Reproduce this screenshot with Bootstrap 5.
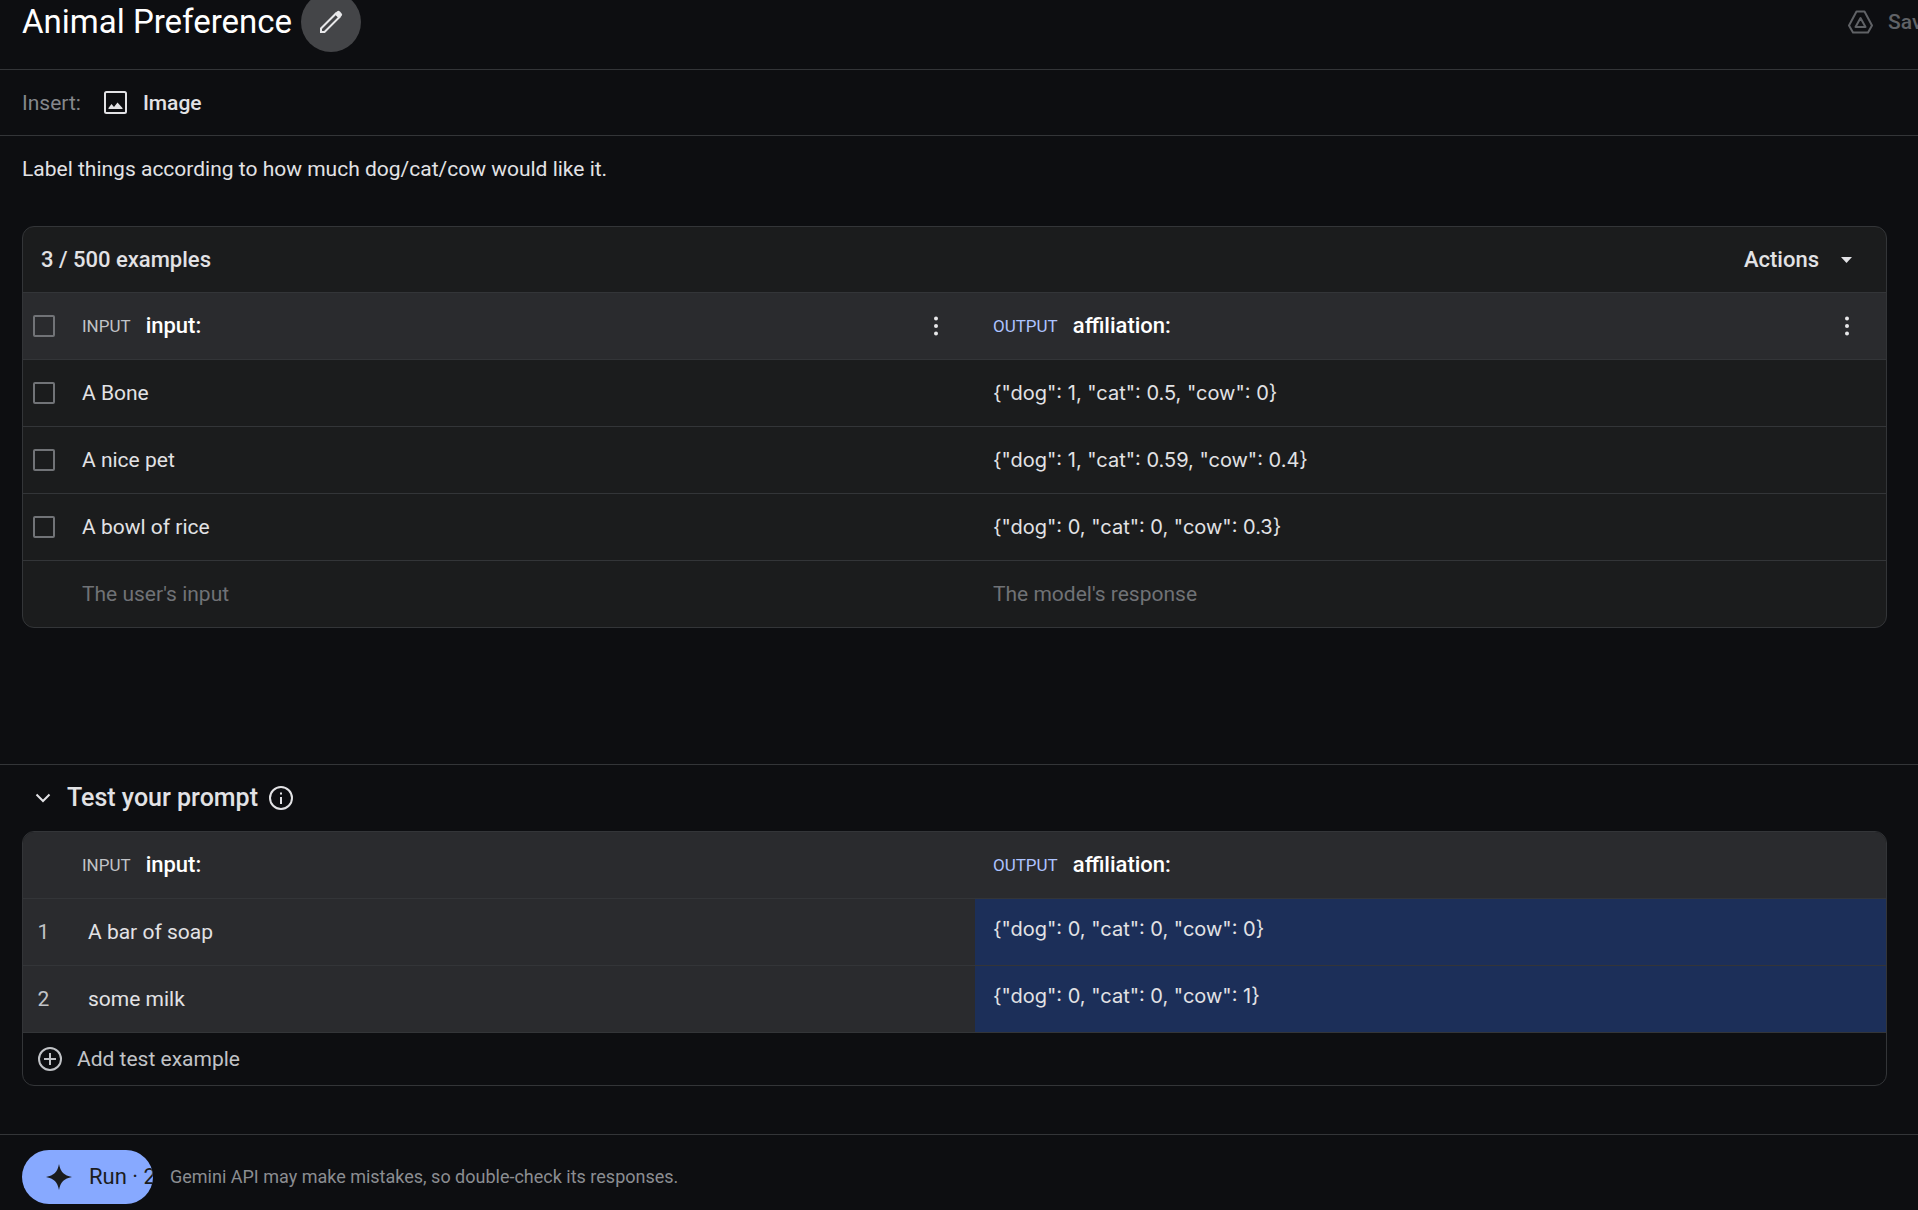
<!DOCTYPE html>
<html lang="en" data-bs-theme="dark">
<head>
<meta charset="utf-8">
<meta name="viewport" content="width=device-width, initial-scale=1">
<title>Animal Preference</title>
<link href="https://cdn.jsdelivr.net/npm/bootstrap@5.3.0/dist/css/bootstrap.min.css" rel="stylesheet">
<style>
:root { --line: #333538; --ink: #e2e2e5; --soft: #c1c3c7; --dim: #707276; }
body { font-family: Roboto, "Open Sans", sans-serif; font-size: 21px; line-height: 30px; color: var(--ink); background: #0d0e11; overflow-x: hidden; }
svg { display: block; flex: none; }
button, input, textarea { color: inherit; font: inherit; letter-spacing: inherit; }
button, textarea, .cell-input { background: none; border: 0; padding: 0; outline-offset: 4px; }
.topbar { height: 70px; padding-left: 22px; padding-bottom: 25px; border-bottom: 1px solid var(--line); }
.title-group { gap: 9px; }
.page-title { font-size: 33px; line-height: 44px; font-weight: 400; }
.edit-btn { width: 60px; height: 60px; background: #444548; }
.save-btn { width: 70px; gap: 15px; color: #606266; font-weight: 500; }
.toolbar { height: 66px; padding-left: 22px; gap: 23px; border-bottom: 1px solid var(--line); }
.insert-label { color: #85878b; }
.insert-btn { gap: 16px; font-weight: 500; }
.editor { padding: 18px 31px 40px 22px; }
.prompt-box { resize: none; height: 30px; margin-bottom: 42px; overflow: hidden; }
.panel { border: 1px solid var(--line); border-radius: 12px; overflow: hidden; }
.panel-dark { background: #1b1c1d; }
.panel-head { height: 66px; padding: 0 34px 0 18px; border-bottom: 1px solid var(--line); font-size: 22px; font-weight: 500; }
.actions-btn { gap: 22px; font-weight: 500; }
.grid { width: 100%; table-layout: fixed; border-collapse: separate; border-spacing: 0; }
.grid th, .grid td { height: 67px; padding: 0 18px; border-bottom: 1px solid var(--line); vertical-align: middle; font-weight: 400; }
.grid .pick-col { width: 41px; padding: 0 0 0 10px; }
.grid thead th { background: #2a2b2e; }
.panel-dark tbody tr:last-child td { height: 66px; border-bottom: 0; }
.tests tbody td { background: #2a2b2e; }
.tests tbody .num { padding: 0; text-align: center; color: var(--soft); }
.tests tbody .case { padding-left: 24px; }
.tests tbody .result { background: #1c2f59; padding-bottom: 6px; }
.grid .json { font-family: Inter, Roboto, sans-serif; font-size: 20px; }
.kind { font-size: 17px; color: var(--soft); }
.kind-out { color: #adc3ff; }
.col-name { color: #fff; font-size: 22px; font-weight: 500; }
.head-cell { gap: 15px; }
.kebab { width: 42px; height: 44px; }
.tick { appearance: none; display: block; width: 22px; height: 22px; margin: 0; border: 2px solid #717377; border-radius: 2px; }
.tick:checked { background: #87a9ff; }
.cell-input { width: 100%; }
.cell-input::placeholder { color: var(--dim); opacity: 1; }
.test-area { border-top: 1px solid var(--line); padding: 0 31px 48px 22px; }
.test-head { height: 66px; gap: 11px; }
.fold { gap: 16px; padding-left: 13px; }
.test-title { font-size: 25px; line-height: 30px; font-weight: 500; }
.add-btn { height: 52px; padding: 0 15px; gap: 15px; color: var(--soft); }
.runbar { height: 76px; padding: 15px 22px 6px; gap: 17px; border-top: 1px solid var(--line); }
.run-btn { width: 131px; height: 54px; padding-left: 23px; gap: 16px; font-size: 22px; background: #87a9ff; color: #1b1c1d; border-radius: 27px; }
.note { font-size: 18px; color: #8b8d91; }
</style>
<script src="https://cdn.jsdelivr.net/npm/bootstrap@5.3.0/dist/js/bootstrap.bundle.min.js"></script>
</head>
<body>
<div class="d-flex flex-column min-vh-100">
  <header class="topbar d-flex align-items-center justify-content-between">
    <div class="title-group d-flex align-items-center">
      <h1 class="page-title mb-0">Animal Preference</h1>
      <button type="button" class="edit-btn rounded-circle d-flex align-items-center justify-content-center" aria-label="Edit title">
        <svg width="24" height="24" viewBox="0 0 24 24" fill="none" stroke="#e8e8ea" stroke-width="2"><path d="M2 22v-3.500L17 3.500 20.500 7 5.500 22z"/><path d="M15.500 4 18 1.500a2 2 0 0 1 2.800 0l1.700 1.700a2 2 0 0 1 0 2.800L20 8.500z" fill="#e8e8ea" stroke="none"/></svg>
      </button>
    </div>
    <button type="button" class="save-btn d-flex align-items-center overflow-hidden text-nowrap flex-shrink-0">
      <svg width="25" height="24" viewBox="0 0 25 24" fill="none" stroke="#606266" stroke-width="2" stroke-linejoin="round"><path d="M8.500 1.500h8L24 15.500l-4 7H5l-4-7z"/><path d="M12.500 8 7.500 17h10z"/></svg>
      <span>Save</span>
    </button>
  </header>

  <div class="toolbar d-flex align-items-center">
    <span class="insert-label">Insert:</span>
    <button type="button" class="insert-btn d-flex align-items-center">
      <svg width="23" height="23" viewBox="0 0 23 23"><rect x="1" y="1" width="21" height="21" rx="1.500" fill="none" stroke="#e2e2e5" stroke-width="2"/><path d="M4.500 18v-1l3-4 2.500 3 3.500-4.500 5 5.500v1z" fill="#e2e2e5"/></svg>
      <span>Image</span>
    </button>
  </div>

  <main class="editor flex-grow-1">
    <textarea class="prompt-box d-block w-100" rows="1" aria-label="Prompt">Label things according to how much dog/cat/cow would like it.</textarea>
    <section class="panel panel-dark">
      <div class="panel-head d-flex align-items-center justify-content-between">
        <span>3 / 500 examples</span>
        <button type="button" class="actions-btn d-flex align-items-center">Actions
          <svg width="11" height="6" viewBox="0 0 11 6"><path d="M0 0h11L5.500 6z" fill="#e2e2e5"/></svg>
        </button>
      </div>
      <table class="grid">
        <thead>
          <tr>
            <th class="pick-col"><input type="checkbox" class="tick" aria-label="Select all"></th>
            <th scope="col"><div class="head-cell d-flex align-items-center"><span class="kind">INPUT</span><span class="col-name">input:</span>
              <button type="button" class="kebab ms-auto d-flex align-items-center justify-content-center" aria-label="Input column menu"><svg width="6" height="20" viewBox="0 0 6 20" fill="#e8e8ea"><circle cx="3" cy="2.500" r="2"/><circle cx="3" cy="10" r="2"/><circle cx="3" cy="17.500" r="2"/></svg></button></div></th>
            <th scope="col"><div class="head-cell d-flex align-items-center"><span class="kind kind-out">OUTPUT</span><span class="col-name">affiliation:</span>
              <button type="button" class="kebab ms-auto d-flex align-items-center justify-content-center" aria-label="Output column menu"><svg width="6" height="20" viewBox="0 0 6 20" fill="#e8e8ea"><circle cx="3" cy="2.500" r="2"/><circle cx="3" cy="10" r="2"/><circle cx="3" cy="17.500" r="2"/></svg></button></div></th>
          </tr>
        </thead>
        <tbody>
          <tr><td class="pick-col"><input type="checkbox" class="tick" aria-label="Select A Bone"></td><td>A Bone</td><td class="json">{"dog": 1, "cat": 0.5, "cow": 0}</td></tr>
          <tr><td class="pick-col"><input type="checkbox" class="tick" aria-label="Select A nice pet"></td><td>A nice pet</td><td class="json">{"dog": 1, "cat": 0.59, "cow": 0.4}</td></tr>
          <tr><td class="pick-col"><input type="checkbox" class="tick" aria-label="Select A bowl of rice"></td><td>A bowl of rice</td><td class="json">{"dog": 0, "cat": 0, "cow": 0.3}</td></tr>
          <tr><td class="pick-col"></td><td><input type="text" class="cell-input" placeholder="The user's input" aria-label="New input"></td><td><input type="text" class="cell-input" placeholder="The model's response" aria-label="New response"></td></tr>
        </tbody>
      </table>
    </section>
  </main>

  <section class="test-area">
    <div class="test-head d-flex align-items-center">
      <button type="button" class="fold d-flex align-items-center">
        <svg width="16" height="10" viewBox="0 0 16 10" fill="none" stroke="#e2e2e5" stroke-width="2"><path d="m1.500 1.500 6.500 6.500 6.500-6.500"/></svg>
        <span class="test-title">Test your prompt</span>
      </button>
      <button type="button" aria-label="About testing">
        <svg width="24" height="24" viewBox="0 0 24 24"><circle cx="12" cy="12" r="11" fill="none" stroke="#e2e2e5" stroke-width="2"/><path d="M11 11h2v7h-2zM11 6.500h2v2h-2z" fill="#e2e2e5"/></svg>
      </button>
    </div>
    <div class="panel">
      <table class="grid tests">
        <thead>
          <tr>
            <th class="pick-col"></th>
            <th scope="col"><div class="head-cell d-flex align-items-center"><span class="kind">INPUT</span><span class="col-name">input:</span></div></th>
            <th scope="col"><div class="head-cell d-flex align-items-center"><span class="kind kind-out">OUTPUT</span><span class="col-name">affiliation:</span></div></th>
          </tr>
        </thead>
        <tbody>
          <tr><td class="num">1</td><td class="case">A bar of soap</td><td class="result json">{"dog": 0, "cat": 0, "cow": 0}</td></tr>
          <tr><td class="num">2</td><td class="case">some milk</td><td class="result json">{"dog": 0, "cat": 0, "cow": 1}</td></tr>
        </tbody>
      </table>
      <button type="button" class="add-btn d-flex align-items-center">
        <svg width="24" height="24" viewBox="0 0 24 24" fill="none" stroke="#c1c3c7" stroke-width="2"><circle cx="12" cy="12" r="11"/><path d="M12 6v12M6 12h12"/></svg>
        <span>Add test example</span>
      </button>
    </div>
  </section>

  <footer class="runbar d-flex align-items-center">
    <button type="button" class="run-btn d-flex align-items-center overflow-hidden text-nowrap flex-shrink-0">
      <svg width="28" height="28" viewBox="0 0 28 28"><path d="M14 1C15.500 9 19 12.500 27 14 19 15.500 15.500 19 14 27 12.500 19 9 15.500 1 14 9 12.500 12.500 9 14 1z" fill="#1b1c1d"/></svg>
      <span>Run · 2</span>
    </button>
    <span class="note">Gemini API may make mistakes, so double-check its responses.</span>
  </footer>
</div>
</body>
</html>
